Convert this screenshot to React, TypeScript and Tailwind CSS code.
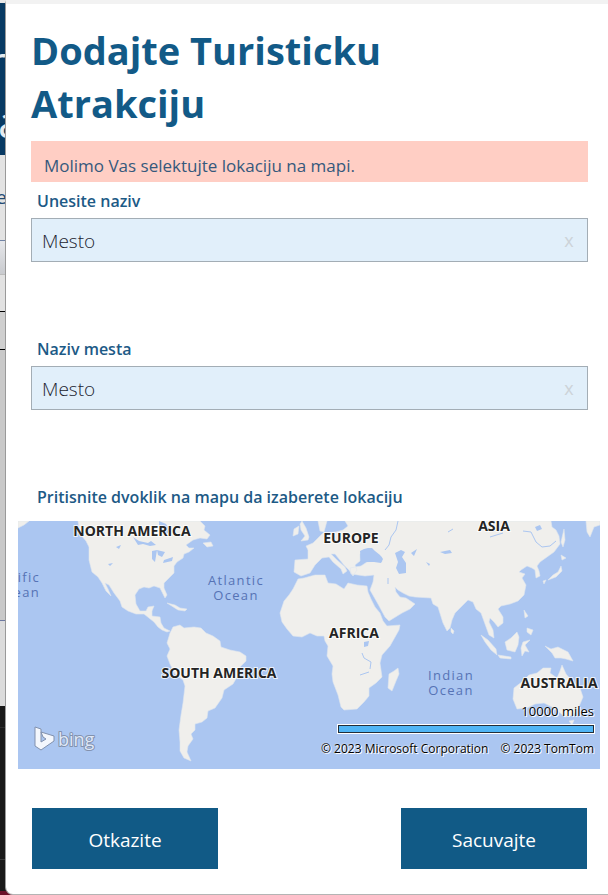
import { useState } from "react";

const LAND = [
  // North and Central America
  "M78 521L80 534L86 541L89 547L89 560L92 572L98 577L102 583L106 591L111 596L108 589L105 583L109 585L114 593L120 601L122 607L128 611L136 614L144 614L149 618L154 622L158 627L162 630L167 632L170 631L164 628L161 623L160 617L152 616L152 611L154 606L148 607L146 611L140 611L136 604L135 595L139 589L144 587L149 588L154 586L160 588L162 592L165 598L167 595L164 588L164 583L170 577L174 573L174 566L177 562L183 558L184 554L189 552L194 548L189 548L186 545L193 540L200 538L207 539L210 535L204 530L205 526L200 521Z",
  // South America
  "M170 633L173 627L180 625L184 628L194 627L201 628L206 633L213 636L220 641L221 647L230 650L240 652L246 656L246 661L240 667L237 677L233 684L224 690L222 698L215 708L208 711L207 718L202 722L195 724L195 730L191 734L193 739L188 746L187 752L191 761L184 758L180 751L180 742L179 730L181 715L183 703L185 686L183 680L175 674L170 664L167 656L170 649L167 643Z",
  // Africa
  "M298 579L304 578L315 575L325 575L328 583L336 584L344 589L348 583L357 585L367 586L368 592L371 599L375 607L380 613L383 621L387 626L400 625L399 630L390 646L382 655L380 663L382 677L376 683L369 688L369 696L364 702L357 709L344 710L341 707L338 695L333 682L332 674L333 666L327 656L328 646L325 641L324 636L317 636L310 633L302 637L293 636L287 629L282 622L280 613L284 601L289 595L293 589Z",
  // Europe and Asia
  "M551 521L552 527L556 530L559 536L560 544L554 552L547 557L540 562L537 566L539 571L540 576L536 578L535 570L532 568L527 566L521 570L519 572L525 574L522 578L526 585L524 595L518 601L510 604L501 606L498 609L503 617L503 623L498 627L494 622L490 618L489 622L493 630L494 638L489 635L485 624L481 613L476 609L473 602L468 600L460 608L455 613L452 620L450 628L447 631L443 623L438 607L433 604L431 598L415 597L409 596L403 593L398 590L395 587L396 592L400 597L406 598L409 600L415 604L410 609L402 613L389 621L385 617L378 604L370 590L373 582L374 575L365 576L358 575L351 574L350 568L355 567L361 566L367 562L375 561L382 562L382 557L375 555L369 549L364 550L360 554L360 561L355 565L357 570L353 576L349 570L344 565L335 554L331 554L337 560L345 567L347 571L343 574L341 569L333 562L329 557L322 558L315 565L310 573L301 576L294 572L295 560L308 559L308 550L306 546L313 543L319 537L323 533L336 532L343 530L348 526L345 521L390 521L450 521Z",
  "M302 521L306 528L309 537L308 540L301 541L305 536L301 530L300 524Z",
  "M294 529L299 526L298 534L293 536Z",
  "M318 521L327 521L324 532L320 531Z",
  "M389 674L394 671L398 668L399 674L396 681L392 691L388 688Z",
  // Southeast Asia and Oceania
  "M481 635L488 640L496 649L497 655L491 650L485 642Z",
  "M498 655L511 657L511 659L500 658Z",
  "M505 642L511 638L517 632L519 637L518 645L515 652L507 650Z",
  "M523 642L530 640L525 645L529 652L525 651L522 656L521 648Z",
  "M524 610L528 616L525 618ZM527 628L533 630L531 635L527 632Z",
  "M545 646L551 649L558 647L568 652L573 661L566 659L561 658L555 658L552 653Z",
  "M451 628L454 631L453 634L451 632Z",
  "M514 688L523 681L529 675L537 673L543 668L551 668L550 673L557 678L560 671L562 665L566 674L572 681L580 688L583 697L578 709L573 715L565 717L558 711L552 707L544 703L535 704L527 708L517 709L513 699Z",
  "M569 721L574 720L572 725Z",
  "M561 555L566 558L562 560ZM561 566L562 571L556 577L548 580L553 575L558 572ZM543 581L546 580L544 584Z",
  "M564 529L565 540L563 547L561 542Z",
  "M586 521L600 521L600 525L594 527L590 537L587 532Z",
  "M18 521L29 521L24 525L18 528Z",
  "M203 543L211 542L213 546L207 547Z",
  "M167 603L175 605L180 608L187 609L185 611L178 610Z",
];

const WATER = [
  "M360 551L364 549L368 548L372 548L375 551L380 555L383 559L381 563L374 562L366 562L361 561Z",
  "M395 553L401 550L405 552L402 557L406 563L406 573L399 574L396 568L398 562Z",
  "M133 537L139 541L148 543L151 541L156 545L150 546L143 544L138 545ZM152 551L157 550L155 562L152 559ZM157 550L165 552L162 557L158 555ZM164 560L173 557L172 561L163 563Z",
  "M159 521L166 524L170 531L165 535L159 530Z",
  "M364 642L369 641L368 646L364 647Z",
  "M116 547L121 545L119 549ZM108 564L113 563L110 566Z",
  "M535 527L540 525L542 529L537 531Z",
  "M440 552L450 550L452 553L445 554ZM411 553L417 549L414 556ZM426 562L430 564L429 566Z",
];

function WorldMap() {
  return (
    <svg
      className="block h-[248px] w-full bg-[#abc6f1]"
      viewBox="18 521 582 248"
      preserveAspectRatio="xMidYMid slice"
      role="img"
      aria-label="Bing"
    >
      <g fill="#f0efec" stroke="#dfe6ee" strokeWidth="0.6" strokeLinejoin="round">
        {LAND.map((d) => (
          <path key={d} d={d} />
        ))}
      </g>
      <g fill="#abc6f1">
        {WATER.map((d) => (
          <path key={d} d={d} />
        ))}
      </g>
      <g fill="none" stroke="#abc6f1" strokeWidth="1">
        <path d="M523 531L531 532L536 542L542 547L550 546L556 541" />
        <path d="M398 521L396 530L391 537L389 545L385 550" />
        <path d="M362 653L364 658L371 662L370 669M360 675L369 672" />
        <path d="M388 578V584M448 532L453 529M490 537L503 533" />
      </g>
      <g
        className="font-['Open_Sans',sans-serif] text-[14px] font-bold"
        fill="#242424"
        stroke="#ffffff"
        strokeWidth="2"
        strokeOpacity="0.8"
        paintOrder="stroke"
        textAnchor="middle"
      >
        <text x="132" y="536">NORTH AMERICA</text>
        <text x="219" y="678">SOUTH AMERICA</text>
        <text x="351" y="543">EUROPE</text>
        <text x="354" y="638">AFRICA</text>
        <text x="494" y="531">ASIA</text>
        <text x="559" y="688">AUSTRALIA</text>
      </g>
      <g
        className="font-['Open_Sans',sans-serif] text-[13px] tracking-widest"
        fill="#5673b5"
        textAnchor="middle"
      >
        <text x="236" y="585">Atlantic</text>
        <text x="236" y="600">Ocean</text>
        <text x="451" y="680">Indian</text>
        <text x="451" y="695">Ocean</text>
        <text x="40" y="582" textAnchor="end">ific</text>
        <text x="40" y="597" textAnchor="end">ean</text>
      </g>
      <g fill="#f4f7fd" stroke="#8291ad" strokeWidth="1" strokeLinejoin="round">
        <path d="M35 727L41 729V742L46 739L43 737L41 732L54 736V741L41 750L35 746Z" />
        <text
          x="58"
          y="746"
          className="font-['Open_Sans',sans-serif] text-[18px]"
          strokeWidth="2"
          paintOrder="stroke"
          fill="#dfe8f8"
        >
          bing
        </text>
      </g>
    </svg>
  );
}

function Field({ id, label }: { id: string; label: string }) {
  const [value, setValue] = useState("Mesto");
  return (
    <div className="mr-5 ml-[25px]">
      <label
        htmlFor={id}
        className="block h-9 pt-1.5 pl-1.5 text-[16px] leading-[26px] font-semibold text-[#1d5a86]"
      >
        {label}
      </label>
      <div className="flex h-11 items-center border border-[#a3adb5] bg-[#e1effa]">
        <input
          id={id}
          value={value}
          onChange={(e) => setValue(e.target.value)}
          className="h-full min-w-0 flex-1 bg-transparent pt-0.5 pl-2.5 text-[19px] font-light text-[#1c2430] outline-none"
        />
        <button
          type="button"
          aria-label="x"
          onClick={() => setValue("")}
          className="w-9 text-[18px] leading-6 text-[#cdd3d8]"
        >
          x
        </button>
      </div>
    </div>
  );
}

function PageBehind() {
  return (
    <div className="col-start-1 row-start-1 flex w-4 flex-col overflow-hidden bg-[#6b1028] pb-1">
      <div className="h-[3px] bg-[#e9e9e9]" />
      <div className="h-[152px] bg-[#083a63] pt-7 text-[44px] leading-[60px] text-[#e4eaf0]">
        <div className="-ml-3">r</div>
        <div className="-ml-0.5">a</div>
      </div>
      <div className="h-[86px] border-b border-[#7183a5] bg-[#e3e3e3] pt-7 text-[19px] leading-7 text-[#1d4a72]">
        <div className="-ml-1">e</div>
      </div>
      <div className="h-[34px] border-b border-[#bcbcbc] bg-linear-to-b from-[#e6e7ea] to-[#c9cbcf]" />
      <div className="h-[37px] border-b border-black bg-[#e2e2e2]" />
      <div className="h-[38px] border-b border-black bg-[#cfcfcf]" />
      <div className="h-[271px] border-b border-[#6d78a0] bg-[#c9c9c9]" />
      <div className="h-[85px] bg-[#dcdcdc]" />
      <div className="h-[22px] border-b border-[#2c2c2c] bg-[#191919]" />
      <div className="h-[132px] border-b border-[#3a3a3a] bg-[#191919]" />
      <div className="flex-1 bg-[#191919]" />
    </div>
  );
}

export default function App() {
  return (
    <div className="grid grid-cols-1 overflow-hidden bg-[#b9b9b9] font-['Open_Sans','Noto_Sans',sans-serif]">
      <PageBehind />
      <main className="relative col-start-1 row-start-1 ml-[5px] rounded-bl-lg border-t-4 border-b border-l border-t-[#f2f2f2] border-b-[#b4b4b4] border-l-[#9a9a9a] bg-white pb-[25px]">
        <h1 className="max-w-[400px] pt-5 pl-[25px] text-[38px] leading-[53px] font-bold text-[#125a87]">
          Dodajte Turisticku Atrakciju
        </h1>
        <p
          role="alert"
          className="mt-[11px] mr-5 ml-[25px] h-[41px] bg-[#ffcec4] pt-3 pl-[13px] text-[17px] leading-[26px] text-[#35597c]"
        >
          Molimo Vas selektujte lokaciju na mapi.
        </p>
        <Field id="naziv" label="Unesite naziv" />
        <div className="mt-[68px]">
          <Field id="mesto" label="Naziv mesta" />
        </div>
        <h2 className="mt-[68px] h-[43px] pt-1.5 pl-[31px] text-[16px] leading-[26px] font-semibold text-[#1d5a86]">
          Pritisnite dvoklik na mapu da izaberete lokaciju
        </h2>
        <div className="relative mr-2 ml-3">
          <WorldMap />
          <div className="absolute right-1.5 bottom-2 flex flex-col items-end text-[12px] leading-6 text-black [text-shadow:1px_1px_0_#fff,0_0_2px_#fff]">
            <span className="text-[13px] leading-5">10000 miles</span>
            <div className="mt-1 mb-1 h-2 w-64 border border-[#222d38] bg-[#50b5f5] outline outline-white" />
            <div className="flex gap-3">
              <span>© 2023 Microsoft Corporation</span>
              <span>© 2023 TomTom</span>
            </div>
          </div>
        </div>
        <div className="mt-[39px] mr-[21px] ml-[26px] flex justify-between text-[19px] text-white">
          <button type="button" className="h-[61px] w-[186px] bg-[#115a86] pt-1">
            Otkazite
          </button>
          <button type="button" className="h-[61px] w-[186px] bg-[#115a86] pt-1">
            Sacuvajte
          </button>
        </div>
      </main>
    </div>
  );
}
